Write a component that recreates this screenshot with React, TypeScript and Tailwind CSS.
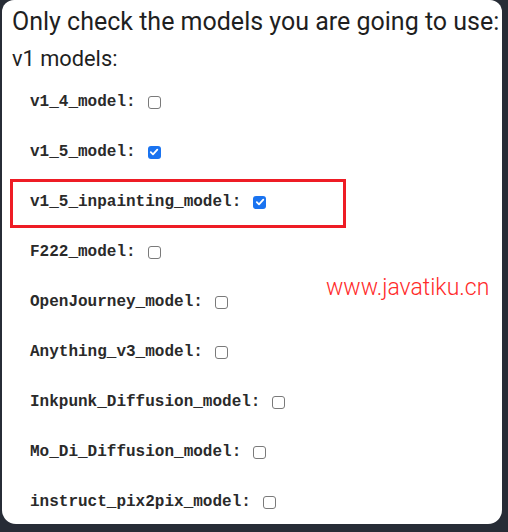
import React from "react";

const models: { name: string; checked: boolean }[] = [
  { name: "v1_4_model:", checked: false },
  { name: "v1_5_model:", checked: true },
  { name: "v1_5_inpainting_model:", checked: true },
  { name: "F222_model:", checked: false },
  { name: "OpenJourney_model:", checked: false },
  { name: "Anything_v3_model:", checked: false },
  { name: "Inkpunk_Diffusion_model:", checked: false },
  { name: "Mo_Di_Diffusion_model:", checked: false },
  { name: "instruct_pix2pix_model:", checked: false },
];

function Box({ checked }: { checked: boolean }) {
  if (checked) {
    return (
      <span className="flex h-[13px] w-[13px] items-center justify-center rounded-[3px] bg-[#1a73f0]">
        <svg width="10" height="10" viewBox="0 0 10 10">
          <path d="M1.8 5.2 L4 7.4 L8.3 2.6" fill="none" stroke="white" strokeWidth="1.8" strokeLinecap="round" strokeLinejoin="round" />
        </svg>
      </span>
    );
  }
  return <span className="block h-[13px] w-[13px] rounded-[3px] border border-[#7a7a7a] bg-white" />;
}

export default function App() {
  return (
    <div className="h-[532px] w-[508px] bg-[#272c36] pl-[2px]">
      <div className="relative h-[524px] w-[500px] rounded-b-[14px] rounded-t-[12px] bg-white text-[#1f1f1f]">
        <div className="whitespace-nowrap pl-[10px] pt-[7px] text-[25px] leading-[30px]" style={{ fontFamily: "Roboto, sans-serif" }}>
          Only check the models you are going to use:
        </div>
        <div className="pl-[10px] pt-[8px] text-[21.8px] leading-[28px]" style={{ fontFamily: "Roboto, sans-serif" }}>
          v1 models:
        </div>
        <div className="mt-[4px] flex flex-col">
          {models.map((m) => (
            <div key={m.name} className="flex h-[50px] items-center pl-[28px]">
              <span className="text-[16px] font-bold text-[#2a2a2a]" style={{ fontFamily: '"Liberation Mono", "Courier New", monospace' }}>
                {m.name}
              </span>
              <span className="ml-[12px]">
                <Box checked={m.checked} />
              </span>
            </div>
          ))}
        </div>
        <div className="absolute left-[8px] top-[179px] h-[49px] w-[336px] border-[3px] border-[#ee1c25]" />
        <div className="absolute left-[324px] top-[274px] text-[23px] font-light leading-[28px] text-[#ff2a2a]" style={{ fontFamily: "Roboto, sans-serif" }}>
          www.javatiku.cn
        </div>
      </div>
    </div>
  );
}
